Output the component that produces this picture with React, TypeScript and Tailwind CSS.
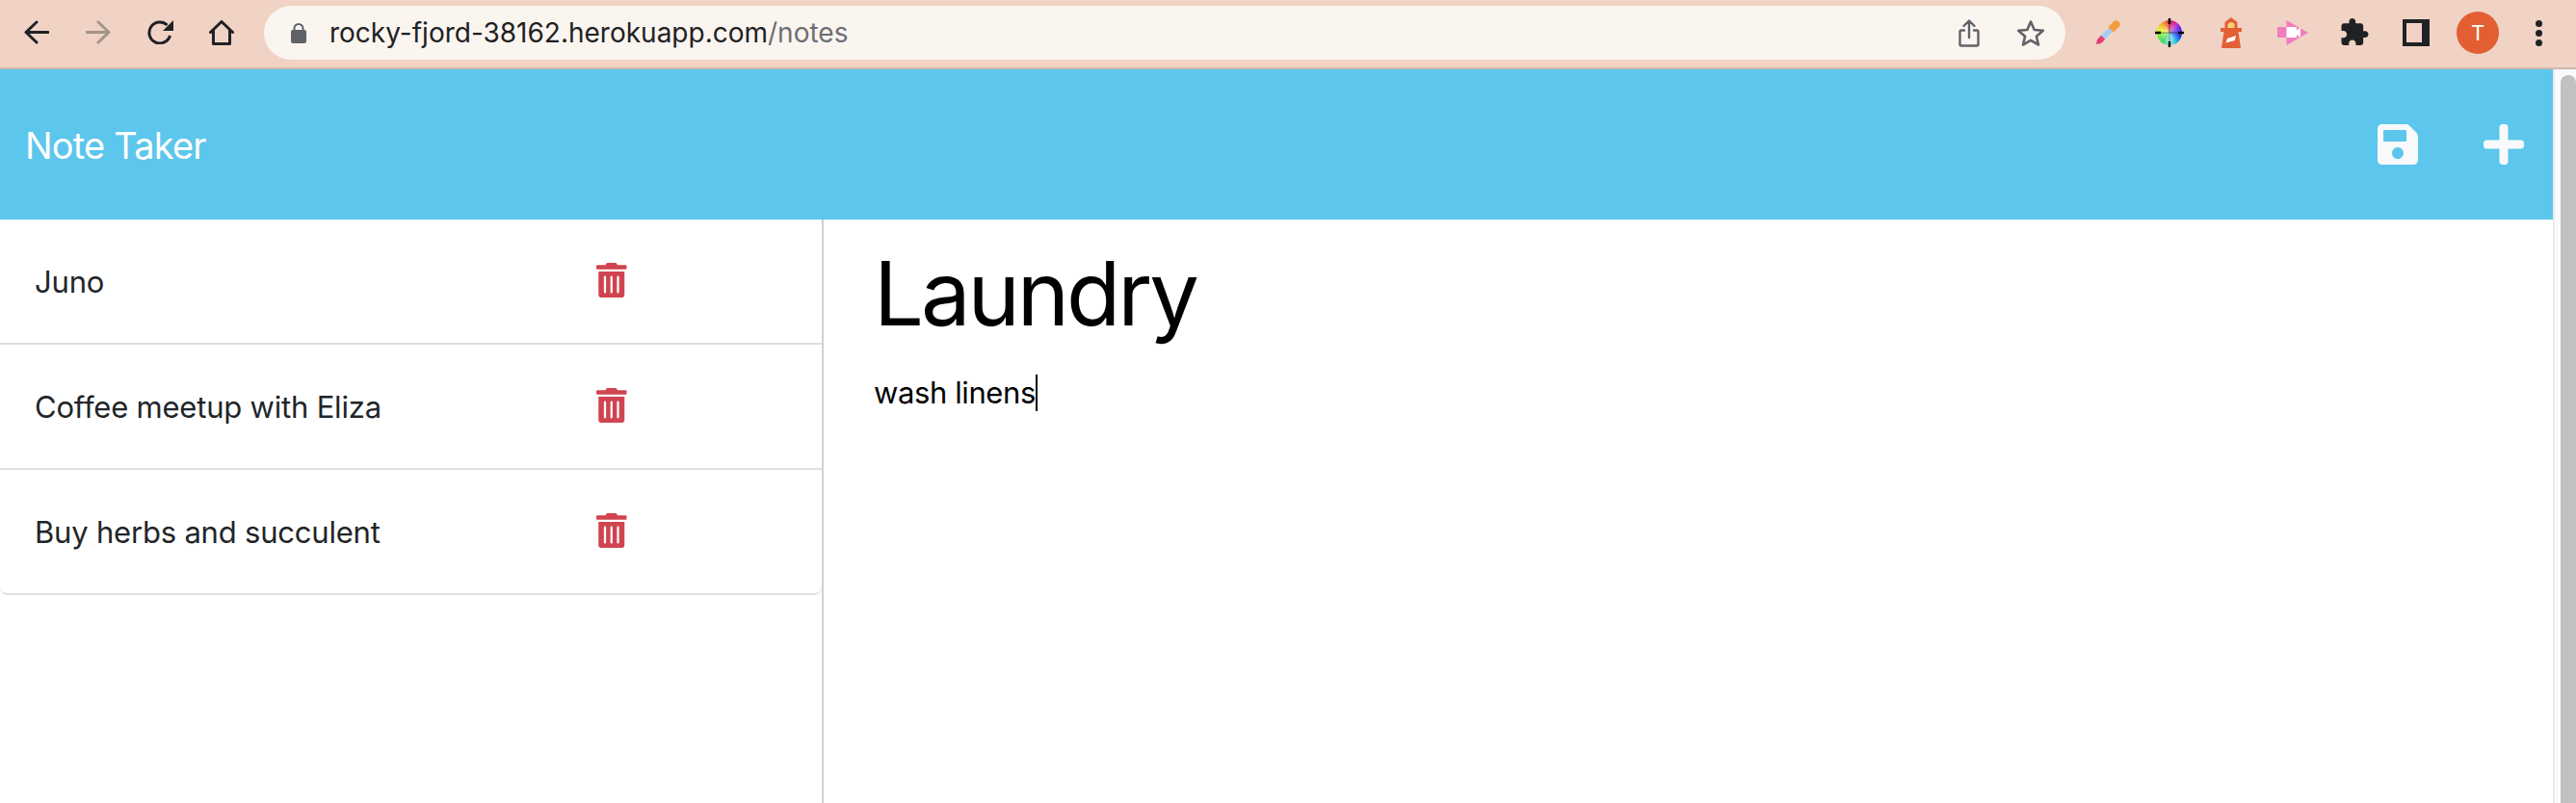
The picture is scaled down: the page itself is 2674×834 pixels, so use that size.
import React from 'react';
import { FaPlus, FaSave, FaTrashAlt } from 'react-icons/fa';

const notes = ['Juno', 'Coffee meetup with Eliza', 'Buy herbs and succulent'];

const BrowserBar = () => (
  <div className="h-[72px] shrink-0 flex items-start bg-[#f0d3c5] border-b-2 border-[#cdb8ad] font-['Inter',sans-serif]">
    <svg className="ml-[25px] mt-[21px] w-[26px] h-[25px]" viewBox="0 0 26 25" fill="none" stroke="#202124" strokeWidth="3" strokeLinecap="round" strokeLinejoin="round">
      <path d="M13 2 L2 12.5 L13 23 M2 12.5 H25" />
    </svg>
    <svg className="ml-[38px] mt-[21px] w-[26px] h-[25px]" viewBox="0 0 26 25" fill="none" stroke="#a2948c" strokeWidth="3" strokeLinecap="round" strokeLinejoin="round">
      <path d="M13 2 L24 12.5 L13 23 M24 12.5 H1" />
    </svg>
    <svg className="ml-[38px] mt-[21px] w-[27px] h-[25px]" viewBox="0 0 27 25" fill="none">
      <path d="M23.5 16 A11 11 0 1 1 20.5 5" stroke="#202124" strokeWidth="3" />
      <path d="M27 0 V11 H16 Z" fill="#202124" />
    </svg>
    <svg className="ml-[37px] mt-[21px] w-[26px] h-[26px]" viewBox="0 0 26 26" fill="none" stroke="#202124" strokeWidth="3" strokeLinecap="round" strokeLinejoin="round">
      <path d="M1.5 12.5 L13 1.5 L24.5 12.5 M4.5 10.5 V24.5 H21.5 V10.5" />
    </svg>

    <div className="ml-[31px] mt-[6px] w-[1870px] h-[56px] rounded-full bg-[#fbf5f0] flex items-center">
      <svg className="ml-[28px] w-[16px] h-[21px]" viewBox="0 0 16 21">
        <path d="M3.5 8 V5.5 A4.5 4.5 0 0 1 12.5 5.5 V8" fill="none" stroke="#5f6368" strokeWidth="2" />
        <rect x="0" y="7" width="16" height="14" rx="2" fill="#5f6368" />
      </svg>
      <div className="ml-[24px] text-[28px] leading-none text-[#202124] whitespace-nowrap">
        rocky-fjord-38162.herokuapp.com<span className="text-[#6b6f73]">/notes</span>
      </div>
      <svg className="ml-auto w-[22px] h-[29px]" viewBox="0 0 22 29" fill="none" stroke="#5f6368" strokeWidth="2.4" strokeLinecap="round" strokeLinejoin="round">
        <path d="M6 11.5 H3 A1.5 1.5 0 0 0 1.5 13 V26 A1.5 1.5 0 0 0 3 27.5 H19 A1.5 1.5 0 0 0 20.5 26 V13 A1.5 1.5 0 0 0 19 11.5 H16 M11 19 V2 M5.5 7 L11 1.5 L16.5 7" />
      </svg>
      <svg className="ml-[38px] mr-[21px] w-[30px] h-[28px]" viewBox="0 0 30 28" fill="none" stroke="#5f6368" strokeWidth="2.6" strokeLinejoin="round">
        <path d="M15 2.5 L18.7 11 L27.8 11.8 L20.9 17.8 L23 26.5 L15 21.9 L7 26.5 L9.1 17.8 L2.2 11.8 L11.3 11 Z" />
      </svg>
    </div>

    <svg className="ml-[31px] mt-[21px] w-[26px] h-[26px]" viewBox="0 0 26 26">
      <path d="M16 6 L20 10 L6 24 L1 25 L2 20 Z" fill="#a3cdf2" />
      <path d="M6.2 15.8 L10.2 19.8 L6 24 L1 25 L2 20 Z" fill="#e5406e" />
      <path d="M13.5 7 L19 1.5 A3.5 3.5 0 0 1 24.5 7 L19 12.5 Z" fill="#f59b3c" />
    </svg>

    <div className="relative ml-[36px] mt-[19px] w-[30px] h-[30px]">
      <div className="absolute left-[2px] top-[2px] w-[26px] h-[26px] rounded-full bg-[conic-gradient(#e0203f,#c020c0,#5020e0,#1030f0,#10c0e0,#a0e8e8,#30d060,#70f040,#e8f020,#f0a020,#e0203f)]" />
      <div className="absolute left-[2px] top-[2px] w-[26px] h-[26px] rounded-full bg-[radial-gradient(circle,#ffffff88,#ffffff00_70%)]" />
      <svg className="absolute inset-0" viewBox="0 0 30 30" stroke="#000">
        <path d="M15 0 V6 M15 24 V30 M0 15 H6 M24 15 H30" strokeWidth="2.4" />
        <path d="M15 6 V24 M6 15 H24" strokeWidth="0.8" strokeOpacity="0.6" />
      </svg>
    </div>

    <svg className="ml-[38px] mt-[18px] w-[22px] h-[32px]" viewBox="0 0 22 32">
      <path d="M11 0 L17.5 5 V11 H22 V15 H18.5 L21 32 H1 L3.5 15 H0 V11 H4.5 V5 Z" fill="#e45f36" />
      <path d="M7.5 7 Q11 3 14.5 7 V11 H7.5 Z" fill="#f4d678" />
      <path d="M7 22 L16 19 L15 24 L5.5 26.5 Z" fill="#fff" />
    </svg>

    <svg className="ml-[37px] mt-[21px] w-[32px] h-[26px]" viewBox="0 0 32 26">
      <path d="M0 7 H9.5 V0 L32 13 L9.5 26 V18 H0 Z" fill="#f27dbe" />
      <path d="M9.5 7 H20 V10.5 L24 7.5 V18 L20 15 V18 H9.5 Z" fill="#fff" />
    </svg>

    <svg className="ml-[34px] mt-[19px] w-[29px] h-[28px]" viewBox="2 1 21 21" fill="#202124">
      <path d="M20.5 11H19V7c0-1.1-.9-2-2-2h-4V3.5C13 2.12 11.88 1 10.5 1S8 2.12 8 3.5V5H4c-1.1 0-1.99.9-1.99 2v3.8H3.5c1.49 0 2.7 1.21 2.7 2.7s-1.21 2.7-2.7 2.7H2V20c0 1.1.9 2 2 2h3.8v-1.5c0-1.49 1.21-2.7 2.7-2.7 1.49 0 2.7 1.21 2.7 2.7V22H17c1.1 0 2-.9 2-2v-4h1.5c1.38 0 2.5-1.12 2.5-2.5S21.88 11 20.5 11z" />
    </svg>

    <div className="ml-[35px] mt-[20px] w-[28px] h-[28px] border-[4px] border-r-[8px] border-[#202124] box-border" />

    <div className="ml-[28px] mt-[12px] w-[44px] h-[44px] rounded-full bg-[#e35f33] flex items-center justify-center text-white text-[22px] font-['Inter',sans-serif]">
      T
    </div>

    <div className="ml-[38px] mt-[21px] flex flex-col gap-[3px]">
      <div className="w-[7px] h-[7px] rounded-full bg-[#202124]" />
      <div className="w-[7px] h-[7px] rounded-full bg-[#202124]" />
      <div className="w-[7px] h-[7px] rounded-full bg-[#202124]" />
    </div>
  </div>
);

const NoteRow = ({ title, last }: { title: string; last: boolean }) => (
  <div className={`h-[130px] flex items-center pl-[36px] border-b-2 border-[#dfdfdf] ${last ? 'rounded-b-[8px]' : ''}`}>
    <span className="w-[583px] text-[31px] tracking-[-0.2px] leading-[48px] text-[#212529] font-['Inter',sans-serif] mt-[2px]">{title}</span>
    <FaTrashAlt className="w-[31.5px] h-[36px] text-[#cf4450] -mt-[3px]" />
  </div>
);

export default function App() {
  return (
    <div className="w-[2674px] h-[834px] overflow-hidden flex flex-col bg-white">
      <BrowserBar />
      <div className="flex-1 flex min-h-0">
        <div className="flex-1 flex flex-col min-w-0">
          <div className="h-[156px] shrink-0 bg-[#5cc6ec] flex items-center pl-[26px] pr-[30px]">
            <span className="text-[38px] tracking-[-0.8px] mt-[2px] text-white font-['Inter',sans-serif]">Note Taker</span>
            <FaSave className="ml-auto w-[42px] h-[48px] text-[#f8f9fa]" />
            <FaPlus className="ml-[68px] w-[42px] h-[48px] text-[#f8f9fa]" />
          </div>
          <div className="flex-1 flex min-h-0">
            <div className="w-[853px] shrink-0">
              {notes.map((n, i) => (
                <NoteRow key={n} title={n} last={i === notes.length - 1} />
              ))}
            </div>
            <div className="flex-1 border-l-2 border-[#d0d0d0] pl-[52px] pt-[22px] font-['Inter',sans-serif] text-black">
              <div className="text-[92px] tracking-[-3.1px] leading-[110px]">Laundry</div>
              <div className="mt-[29px] text-[31px] tracking-[-0.4px] leading-[36px] flex items-center">
                wash linens<span className="w-[2px] h-[38px] bg-black" />
              </div>
            </div>
          </div>
        </div>
        <div className="w-[24px] shrink-0 bg-[#fafafa] border-l-2 border-[#ebebeb] pl-[6px] pt-[6px]">
          <div className="h-full rounded-t-[8px] bg-[#c1c1c1]" />
        </div>
      </div>
    </div>
  );
}
